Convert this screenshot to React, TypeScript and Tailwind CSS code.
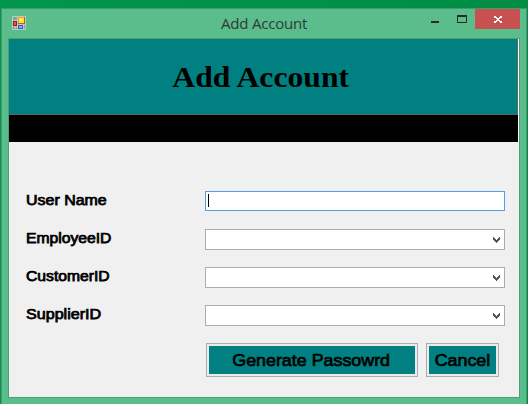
import React from 'react';

function FormIcon() {
  return (
    <svg width="14" height="14" viewBox="0 0 14 14" shapeRendering="crispEdges">
      <rect width="14" height="14" fill="#c5c3c4" />
      <rect x="1" y="1" width="4" height="3" fill="#5bbd8b" />
      <rect x="1" y="5" width="4" height="5" fill="#a51616" />
      <rect x="2" y="6" width="2" height="3" fill="#d9584f" />
      <rect x="1" y="11" width="2" height="2" fill="#5bbd8b" />
      <rect x="4" y="11" width="1" height="2" fill="#5bbd8b" />
      <rect x="6" y="1" width="7" height="7" fill="#a87008" />
      <rect x="6" y="1" width="6" height="6" fill="#e8ad18" />
      <rect x="7" y="2" width="5" height="5" fill="#ffdb4c" />
      <rect x="8" y="3" width="2" height="2" fill="#fff2ad" />
      <rect x="6" y="9" width="5" height="4" fill="#3764c8" />
      <rect x="7" y="10" width="3" height="2" fill="#83a7ee" />
      <rect x="12" y="9" width="1" height="4" fill="#5bbd8b" />
    </svg>
  );
}

function TitleBar() {
  return (
    <header className="relative flex h-[29px] shrink-0 justify-between">
      <div className="pt-[7px] pl-[10px]">
        <FormIcon />
      </div>
      <span className="absolute top-[4px] left-[219px] whitespace-nowrap font-['Open_Sans',sans-serif] text-[15px] leading-5 tracking-[-0.2px] text-[#30383a]">
        Add Account
      </span>
      <div className="flex pr-[6px]">
        <svg width="44" height="20" shapeRendering="crispEdges">
          <path d="M0 12h8v2H0z" fill="#2b2b2b" />
          <path d="M26 6h10v8H26zM27 8v5h8V8z" fill="#2b2b2b" fillRule="evenodd" />
        </svg>
        <div className="grid h-5 w-[45px] place-items-center bg-[#c75050]">
          <svg width="8" height="7" viewBox="0 0 8 7" shapeRendering="crispEdges" fill="#fff">
            <path d="M0 0h2v1H0zM6 0h2v1H6zM0 1h3v1H0zM5 1h3v1H5zM2 2h4v1H2zM3 3h2v1H3zM2 4h4v1H2zM0 5h3v1H0zM5 5h3v1H5zM0 6h2v1H0zM6 6h2v1H6z" />
          </svg>
        </div>
      </div>
    </header>
  );
}

function Label({ children, stretch }: { children: string; stretch: string }) {
  return (
    <label className="-mt-px w-[179px] font-['Liberation_Sans',sans-serif] text-[14px] leading-5 text-black">
      <span className={`inline-block origin-left whitespace-nowrap [-webkit-text-stroke:0.75px_black] ${stretch}`}>
        {children}
      </span>
    </label>
  );
}

function Dropdown() {
  return (
    <div className="flex h-[21px] w-[300px] items-center justify-end border border-[#abadb3] bg-white pr-1">
      <svg width="7" height="6" viewBox="0 0 7 6" shapeRendering="crispEdges" fill="#555">
        <path d="M0 0h1v1H0zM6 0h1v1H6zM0 1h2v1H0zM5 1h2v1H5zM0 2h3v1H0zM4 2h3v1H4zM1 3h5v1H1zM2 4h3v1H2zM3 5h1v1H3z" />
      </svg>
    </div>
  );
}

function FormButton({ children, size }: { children: string; size: string }) {
  return (
    <button className={`h-[34px] border border-[#acacac] bg-[#ebebeb] p-[2px] ${size}`}>
      <span className="flex h-full items-center justify-center bg-[#008080] pr-px font-['Liberation_Sans',sans-serif] text-[17px] leading-none text-black">
        <span className="scale-x-[1.05] whitespace-nowrap [-webkit-text-stroke:0.7px_black]">{children}</span>
      </span>
    </button>
  );
}

export default function App() {
  return (
    <div className="h-[404px] w-[528px] overflow-hidden bg-[linear-gradient(90deg,#00964b,#008c43)] pt-2 pl-px">
      <main className="flex h-[410px] w-[526px] flex-col border border-[#45996c] bg-[#5bbd8b]">
        <TitleBar />
        <section className="ml-[6px] h-[360px] w-[512px] border border-[#4ba174] bg-[#f0f0f0]">
          <div className="flex h-[103px] flex-col border-r border-white">
            <div className="flex h-[76px] items-center justify-center border-r border-b border-[#646464] bg-[#008080]">
              <h1 className="scale-x-[1.055] pt-px pr-[4px] font-['Liberation_Serif',serif] text-[30px] leading-none font-bold whitespace-nowrap text-black">
                Add Account
              </h1>
            </div>
            <div className="grow bg-black" />
          </div>
          <form className="flex flex-col pt-[49px] pl-[17px]">
            <div className="flex h-[38px]">
              <Label stretch="scale-x-[1.14]">User Name</Label>
              <div className="h-5 w-[300px] border border-[#569de5] bg-white pt-[2px] pl-[2px]">
                <div className="h-[13px] w-px bg-black" />
              </div>
            </div>
            <div className="flex h-[38px]">
              <Label stretch="scale-x-[1.12]">EmployeeID</Label>
              <Dropdown />
            </div>
            <div className="flex h-[38px]">
              <Label stretch="scale-x-[1.12]">CustomerID</Label>
              <Dropdown />
            </div>
            <div className="flex h-[38px]">
              <Label stretch="scale-x-[1.15]">SupplierID</Label>
              <Dropdown />
            </div>
            <div className="flex gap-2 pl-[180px]">
              <FormButton size="w-[212px]">Generate Passowrd</FormButton>
              <FormButton size="w-[73px]">Cancel</FormButton>
            </div>
          </form>
        </section>
      </main>
    </div>
  );
}
